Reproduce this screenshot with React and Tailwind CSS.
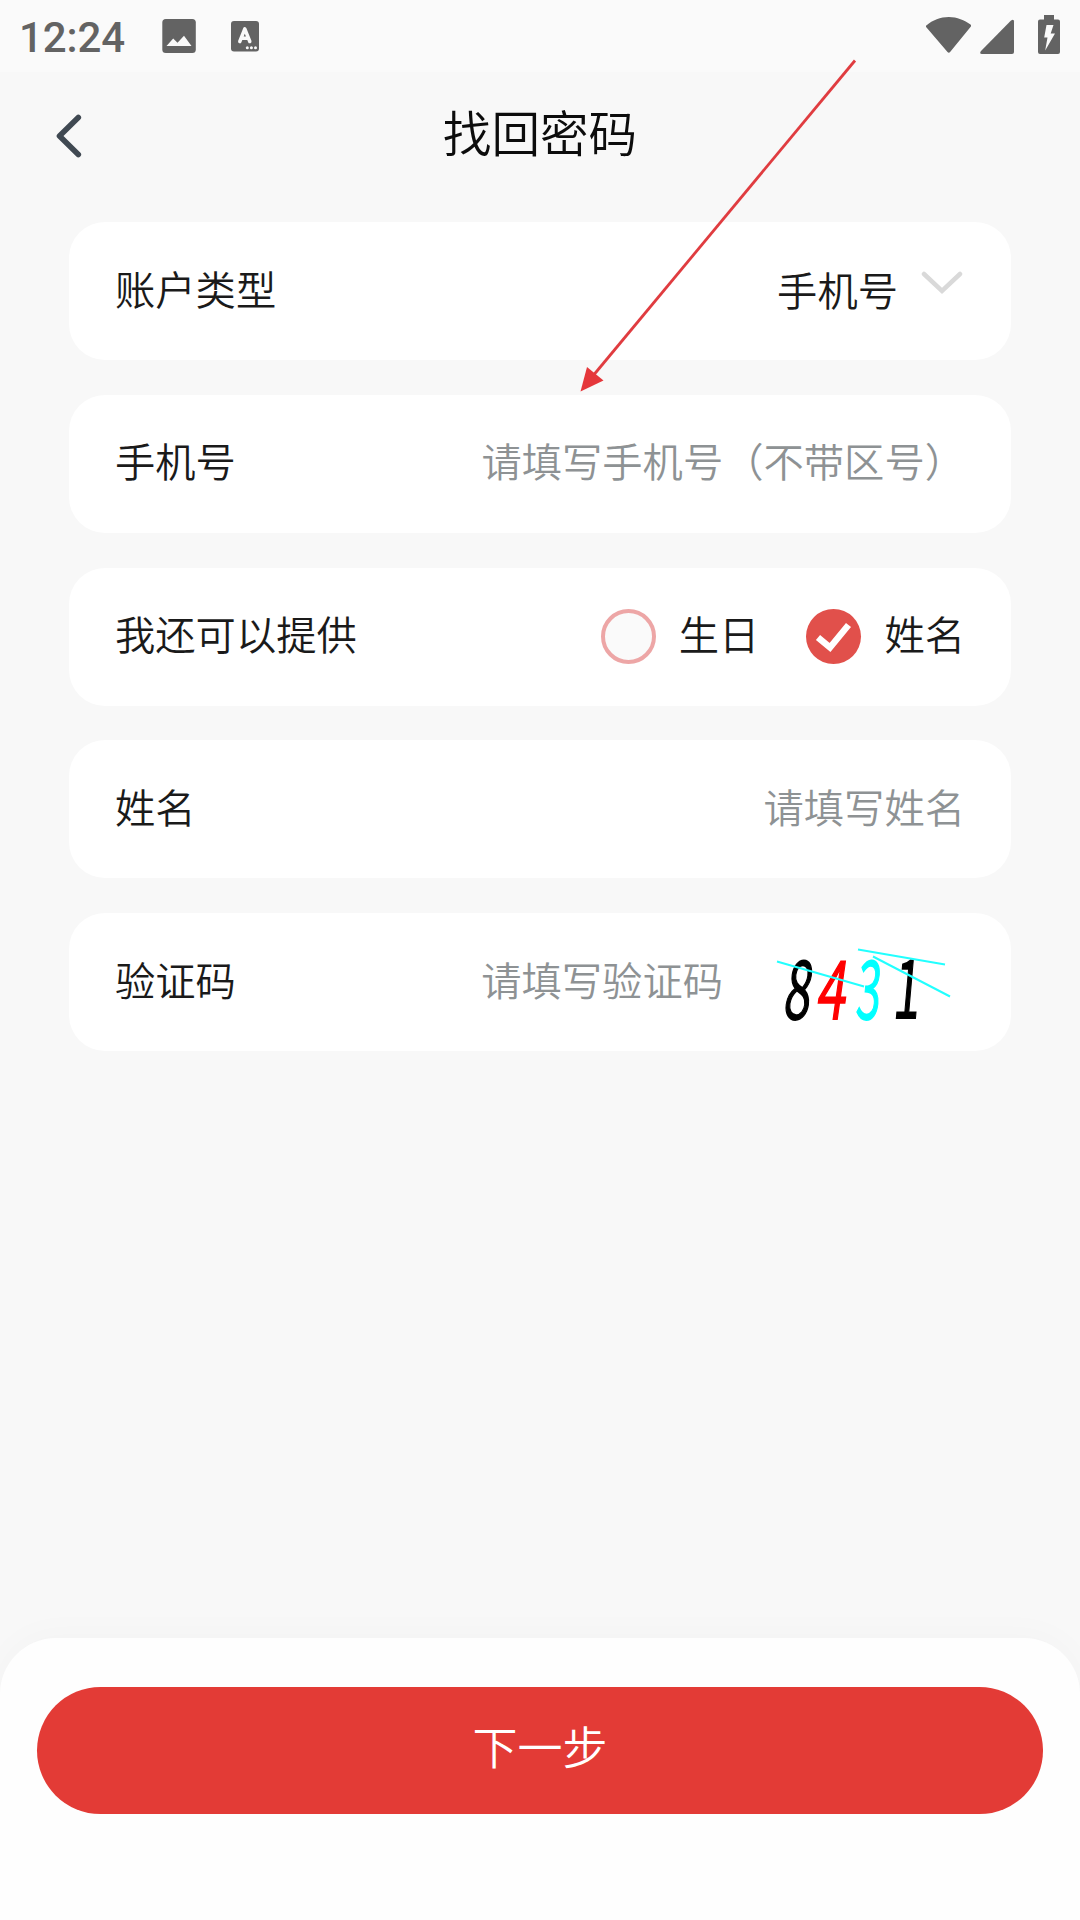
import React from 'react';

const StatusBar = () => (
    <div className="flex h-[72px] items-center justify-between bg-[#fafafa] pl-[19px] pr-5 text-[#636363]">
        <div className="flex items-center">
            <span className="w-[142px] pt-[3px] font-['Roboto',sans-serif] text-[42px] leading-[69px] font-medium tracking-[-0.1px]">12:24</span>
            <svg width="36" height="36" viewBox="0 0 36 36" className="ml-[1px]">
                <rect x="0.3" y="1" width="33.5" height="34" rx="3.5" fill="#636363" />
                <path d="M4.5 28 L11.2 20.5 L15.5 24.7 L22 17.8 L29.5 28 Z" fill="#fafafa" />
            </svg>
            <svg width="30" height="32" viewBox="0 0 30 32" className="ml-[33px]">
                <rect x="0" y="1" width="28" height="30.5" rx="3" fill="#636363" />
                <path d="M8.8 21.5 L13.8 8.8 L18.8 21.5 M10.2 18.2 H17.4" fill="none" stroke="#fafafa" strokeWidth="3.5" strokeLinecap="round" strokeLinejoin="round" />
                <g fill="#fafafa">
                    <circle cx="16.3" cy="27.8" r="1.5" />
                    <circle cx="20.4" cy="27.8" r="1.5" />
                    <circle cx="24.5" cy="27.8" r="1.5" />
                </g>
            </svg>
        </div>
        <div className="flex items-center text-[#636363]">
            <svg width="46" height="40" viewBox="0 0 46 40" fill="currentColor">
                <path d="M0.6 9.2 C6.5 4.2 14.5 1 22.8 1 C31.1 1 38.5 4.2 44.5 8.6 Q45.5 9.6 44.7 10.8 L24.1 36 Q22.8 37.6 21.5 36 L0.1 11 Q-0.5 10 0.6 9.2 Z" />
            </svg>
            <svg width="36" height="40" viewBox="0 0 36 40" fill="currentColor" className="ml-[8px]">
                <path d="M1 35 L31 4.6 Q34 2.6 34 5.6 V36 Q34 38 32 38 H2 Q-1 38 1 35 Z" />
            </svg>
            <svg width="22" height="40" viewBox="0 0 22 40" className="mb-[2px] ml-[22px]">
                <path d="M6 0 H16 V4.5 H20 Q22 4.5 22 6.5 V37 Q22 39 20 39 H2 Q0 39 0 37 V6.5 Q0 4.5 2 4.5 H6 Z" fill="currentColor" />
                <path d="M8.5 10 H15.5 L12.7 18.5 H17 L7.2 35.5 L9.5 22.5 H6.2 Z" fill="#fafafa" />
            </svg>
        </div>
    </div>
);

const Header = () => (
    <header className="relative flex h-[150px] justify-center pt-[23px]">
        <svg width="28" height="46" viewBox="0 0 28 46" className="absolute left-[54px] top-[41px]">
            <path d="M24.3 4.5 L5.5 23 L24.3 41.5" fill="none" stroke="#404952" strokeWidth="5.6" strokeLinecap="round" strokeLinejoin="round" />
        </svg>
        <h1 className="text-[48.6px] leading-[72px] font-[350] text-[#0c0c0c]">找回密码</h1>
    </header>
);

const Row = ({ label, children }) => (
    <div className="flex h-[138px] items-center justify-between rounded-[36px] bg-white px-[46px]">
        <span className="pb-[7px]">{label}</span>
        {children}
    </div>
);

const Placeholder = ({ children }) => (
    <span className="pb-[7px] text-[#8e9294]">{children}</span>
);

const Option = ({ label, checked }) => (
    <div className="flex items-center gap-[22px]">
        <svg width="56" height="56" viewBox="0 0 56 56">
            {checked ? (
                <>
                    <circle cx="27.5" cy="27.5" r="27.5" fill="#e1504b" />
                    <path d="M12 28.5 L24 38.5 L42.5 16" fill="none" stroke="#fff" strokeWidth="6.5" strokeLinejoin="miter" />
                </>
            ) : (
                <circle cx="27.5" cy="27.5" r="25.5" fill="#fafafa" stroke="#eda6a6" strokeWidth="4" />
            )}
        </svg>
        <span className="pb-[7px]">{label}</span>
    </div>
);

const digits = [
    { char: '8', fill: '#000', transform: 'translate(5 72) skewX(-8) scale(0.6 1)' },
    { char: '4', fill: '#f00', transform: 'translate(38 72) skewX(-8) scale(0.66 1)' },
    { char: '3', fill: '#0ff', transform: 'translate(78 72) skewX(-5) scale(0.54 1)' },
    { char: '1', fill: '#000', transform: 'translate(115 71) skewX(-5) scale(0.6 1)' },
];

const Captcha = () => (
    <svg width="188" height="90" viewBox="0 0 188 90" className="mt-[20px] ml-[54px] shrink-0 overflow-visible">
        {digits.map(d => (
            <text
                key={d.char}
                transform={d.transform}
                fill={d.fill}
                stroke={d.fill}
                strokeWidth="1.8"
                fontFamily="'Noto Sans CJK SC', sans-serif"
                fontSize="81"
                fontWeight="350"
            >
                {d.char}
            </text>
        ))}
        <path d="M0 14.5 L87 39.5 M81 2.5 L168 17.5 M96 9.5 L173 49.5" stroke="#2ff" strokeWidth="2" fill="none" />
    </svg>
);

const App = () => {
    return (
        <div className="relative flex h-[1920px] w-[1080px] flex-col overflow-hidden bg-[#f8f8f8] font-['Noto_Sans_CJK_SC',sans-serif] text-[40.3px] leading-[60px] font-[350] text-[#1a1a1a]">
            <StatusBar />
            <Header />

            <main className="flex flex-1 flex-col gap-[34.75px] px-[69px]">
                <Row label="账户类型">
                    <div className="flex items-center">
                        <span className="pb-[5px]">手机号</span>
                        <svg width="42" height="26" viewBox="0 0 42 26" className="mr-[2px] mb-[14px] ml-[23px]">
                            <path d="M3 3 L21 20 L39 3" fill="none" stroke="#d9d9d9" strokeWidth="4.5" strokeLinecap="round" />
                        </svg>
                    </div>
                </Row>
                <Row label="手机号">
                    <Placeholder>请填写手机号（不带区号）</Placeholder>
                </Row>
                <Row label="我还可以提供">
                    <div className="flex items-center gap-[47px]">
                        <Option label="生日" />
                        <Option label="姓名" checked />
                    </div>
                </Row>
                <Row label="姓名">
                    <Placeholder>请填写姓名</Placeholder>
                </Row>
                <Row label="验证码">
                    <div className="flex items-center">
                        <Placeholder>请填写验证码</Placeholder>
                        <Captcha />
                    </div>
                </Row>
            </main>

            <footer className="h-[282px] rounded-t-[56px] bg-[#fefefe] px-[37px] pt-[49px] shadow-[0_-4px_36px_rgba(0,0,0,0.025)]">
                <button className="h-[127px] w-full rounded-full bg-[#e33b36] pb-[9px] text-[45px] font-[350] text-white">下一步</button>
            </footer>

            {/* pointer to the phone number row */}
            <svg width="290" height="340" viewBox="0 0 290 340" className="pointer-events-none absolute left-[575px] top-[55px]">
                <path d="M280 5.5 L17 322" stroke="#e03c40" strokeWidth="2.8" />
                <path d="M5.5 336.5 L12 312 L28.5 325.5 Z" fill="#e5373b" />
            </svg>
        </div>
    );
};

export default App;
